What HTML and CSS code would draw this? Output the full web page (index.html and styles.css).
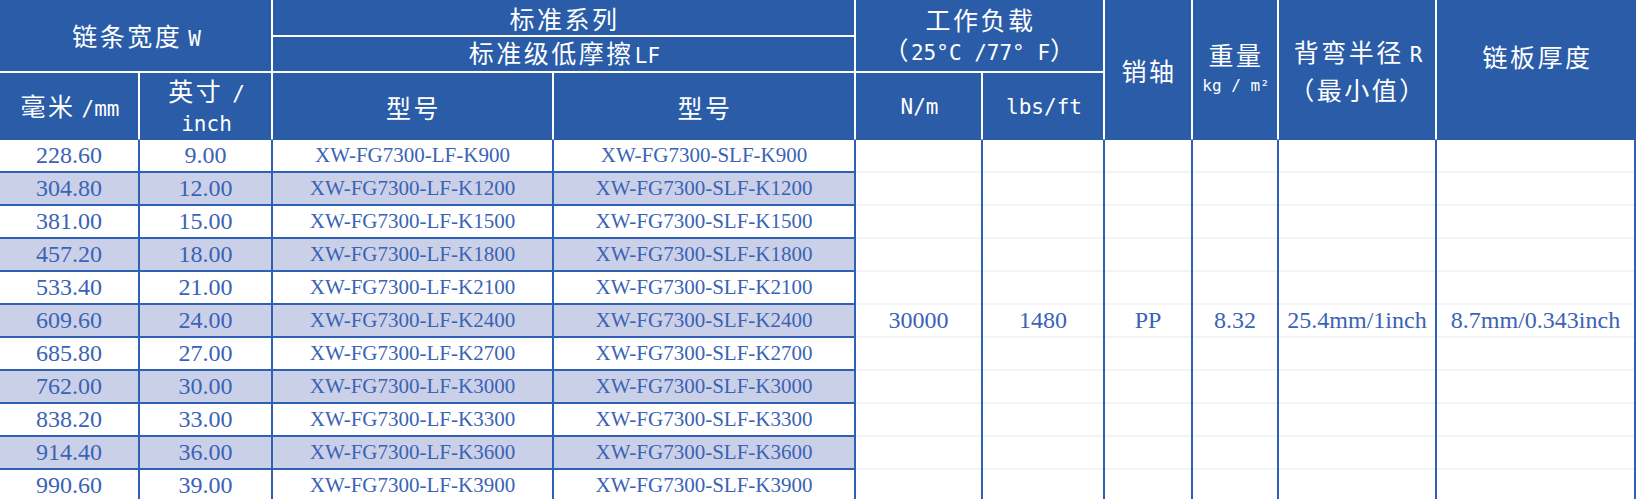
FILE: index.html
```html
<!DOCTYPE html>
<html lang="zh-CN">
<head>
<meta charset="utf-8">
<title>XW-FG7300 标准系列</title>
<link rel="stylesheet" href="styles.css">
</head>
<body>
<div class="sheet">
  <div class="head">
    <div class="hc h-width"><span class="ln">链条宽度<span class="lt gap8">W</span></span></div>
    <div class="hc h-series"><span class="ln">标准系列</span></div>
    <div class="hc h-lf"><span class="ln">标准级低摩擦<span class="lt gap2">LF</span></span></div>
    <div class="hc h-load">
      <span class="ln">工作负载</span>
      <span class="ln">（<span class="lt">25°C /77° F</span>）</span>
    </div>
    <div class="hc h-pin"><span class="ln">销轴</span></div>
    <div class="hc h-weight">
      <span class="ln">重量</span>
      <span class="ln lt small">kg / m²</span>
    </div>
    <div class="hc h-radius">
      <span class="ln">背弯半径<span class="lt gap8">R</span></span>
      <span class="ln">（最小值）</span>
    </div>
    <div class="hc h-thick"><span class="ln">链板厚度</span></div>
    <div class="hc"><span class="ln">毫米<span class="lt gap8">/mm</span></span></div>
    <div class="hc">
      <span class="ln">英寸<span class="lt gap12">/</span></span>
      <span class="ln lt">inch</span>
    </div>
    <div class="hc"><span class="ln">型号</span></div>
    <div class="hc"><span class="ln">型号</span></div>
    <div class="hc"><span class="ln lt">N/m</span></div>
    <div class="hc"><span class="ln lt">lbs/ft</span></div>
  </div>

  <div class="body">
    <div class="dc">228.60</div><div class="dc">9.00</div><div class="dc code">XW-FG7300-LF-K900</div><div class="dc code">XW-FG7300-SLF-K900</div>
    <div class="dc merged">30000</div>
    <div class="dc merged">1480</div>
    <div class="dc merged">PP</div>
    <div class="dc merged">8.32</div>
    <div class="dc merged">25.4mm/1inch</div>
    <div class="dc merged">8.7mm/0.343inch</div>

    <div class="dc alt">304.80</div><div class="dc alt">12.00</div><div class="dc alt code">XW-FG7300-LF-K1200</div><div class="dc alt code">XW-FG7300-SLF-K1200</div>
    <div class="dc">381.00</div><div class="dc">15.00</div><div class="dc code">XW-FG7300-LF-K1500</div><div class="dc code">XW-FG7300-SLF-K1500</div>
    <div class="dc alt">457.20</div><div class="dc alt">18.00</div><div class="dc alt code">XW-FG7300-LF-K1800</div><div class="dc alt code">XW-FG7300-SLF-K1800</div>
    <div class="dc">533.40</div><div class="dc">21.00</div><div class="dc code">XW-FG7300-LF-K2100</div><div class="dc code">XW-FG7300-SLF-K2100</div>
    <div class="dc alt">609.60</div><div class="dc alt">24.00</div><div class="dc alt code">XW-FG7300-LF-K2400</div><div class="dc alt code">XW-FG7300-SLF-K2400</div>
    <div class="dc">685.80</div><div class="dc">27.00</div><div class="dc code">XW-FG7300-LF-K2700</div><div class="dc code">XW-FG7300-SLF-K2700</div>
    <div class="dc alt">762.00</div><div class="dc alt">30.00</div><div class="dc alt code">XW-FG7300-LF-K3000</div><div class="dc alt code">XW-FG7300-SLF-K3000</div>
    <div class="dc">838.20</div><div class="dc">33.00</div><div class="dc code">XW-FG7300-LF-K3300</div><div class="dc code">XW-FG7300-SLF-K3300</div>
    <div class="dc alt">914.40</div><div class="dc alt">36.00</div><div class="dc alt code">XW-FG7300-LF-K3600</div><div class="dc alt code">XW-FG7300-SLF-K3600</div>
    <div class="dc">990.60</div><div class="dc">39.00</div><div class="dc code">XW-FG7300-LF-K3900</div><div class="dc code">XW-FG7300-SLF-K3900</div>
  </div>
</div>
</body>
</html>
```

FILE: styles.css
```css
html, body {
  margin: 0;
  padding: 0;
  overflow: hidden;
  background: #ffffff;
}

.sheet {
  width: 1636px;
}

.head {
  display: grid;
  grid-template-columns: 138px 131px 279px 300px 125px 120px 86px 84px 156px 199px;
  grid-template-rows: 35px 34px 67px;
  gap: 2px;
  background: #ffffff;
  border-bottom: 1px solid #8ea6d6;
  height: 139px;
  box-sizing: content-box;
}

.hc {
  display: flex;
  flex-direction: column;
  align-items: center;
  justify-content: center;
  background: #2a5ca8;
  color: #ffffff;
  font-family: "Noto Sans CJK SC", "Noto Sans", sans-serif;
  font-size: 25px;
  line-height: 30px;
  letter-spacing: 2.5px;
  white-space: nowrap;
  padding-left: 2px;
}

.ln {
  display: block;
}

.lt {
  font-family: "DejaVu Sans Mono", monospace;
  font-size: 21px;
  letter-spacing: 0;
}

.lt.small {
  font-size: 16px;
}

.gap2 { margin-left: 1px; }
.gap8 { margin-left: 6px; }
.gap12 { margin-left: 9px; }

.h-width  { grid-column: 1 / 3; grid-row: 1 / 3; padding-top: 3px; }
.h-series { grid-column: 3 / 5; grid-row: 1; }
.h-lf     { grid-column: 3 / 5; grid-row: 2; }
.h-load   { grid-column: 5 / 7; grid-row: 1 / 3; }
.h-pin    { grid-column: 7; grid-row: 1 / 4; }
.h-weight { grid-column: 8; grid-row: 1 / 4; line-height: 31px; }
.h-radius { grid-column: 9; grid-row: 1 / 4; line-height: 34px; }
.h-thick  { grid-column: 10; grid-row: 1 / 4; padding-bottom: 28px; }

.body {
  display: grid;
  grid-template-columns: 138px 131px 279px 300px 125px 120px 86px 84px 156px 197px;
  grid-template-rows: repeat(11, 31px);
  gap: 2px;
  padding-right: 2px;
  background: #2e60b3;
}

.dc {
  display: flex;
  align-items: center;
  justify-content: center;
  background: #ffffff;
  color: #3a63b5;
  font-family: "Liberation Serif", "Times New Roman", serif;
  font-size: 24px;
  white-space: nowrap;
}

.dc.code {
  font-size: 21px;
}

.dc.alt {
  background: #cbd0e9;
}

.dc.merged {
  grid-row: span 11;
  background: repeating-linear-gradient(to bottom, #ffffff 0, #ffffff 31px, #f2f4fa 31px, #f2f4fa 33px);
}
```
